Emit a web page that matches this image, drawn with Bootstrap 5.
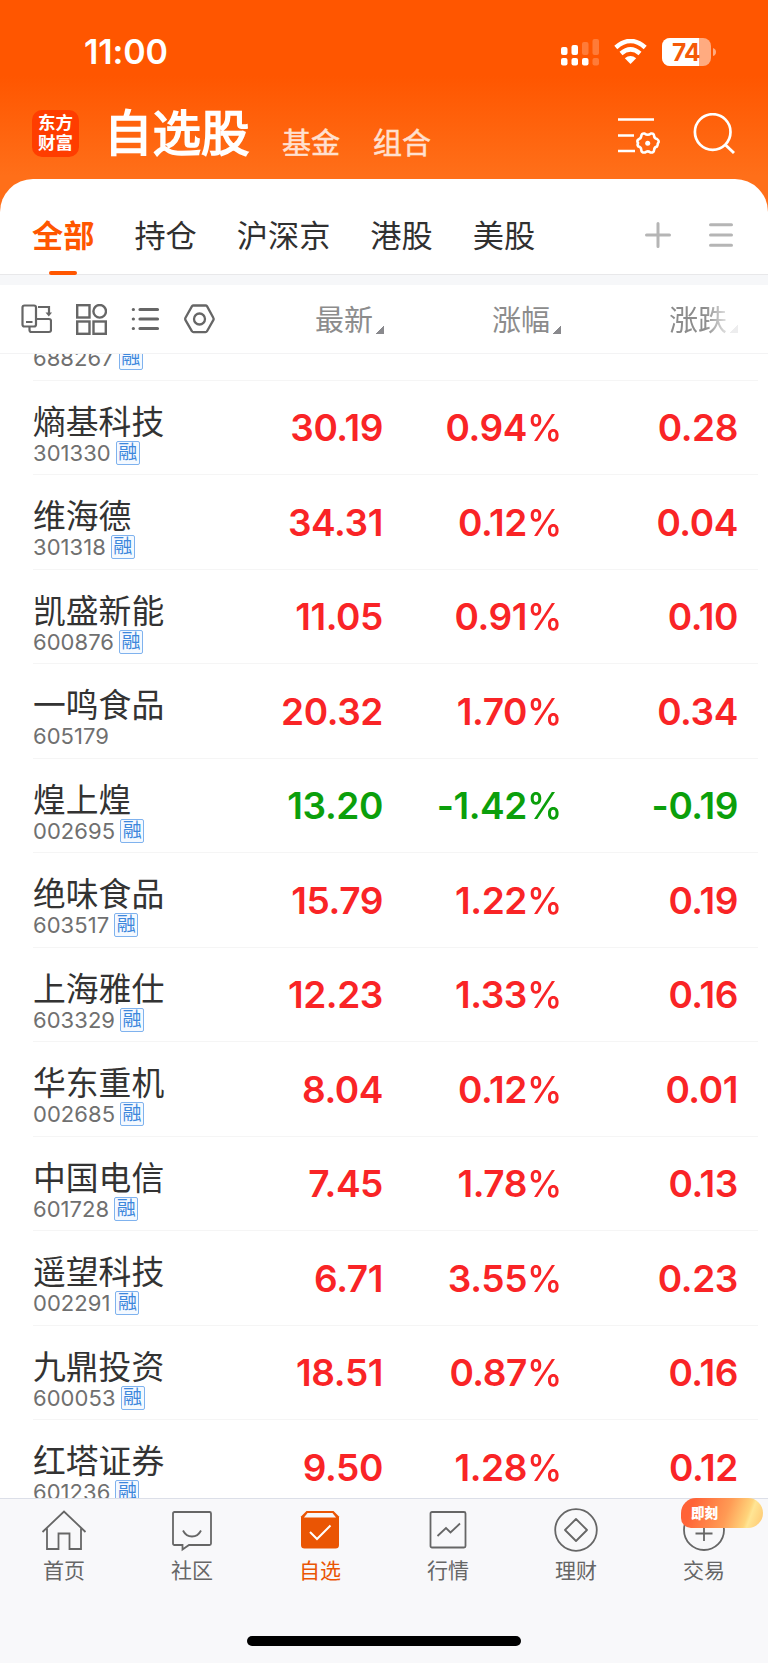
<!DOCTYPE html>
<html lang="zh-CN">
<head>
<meta charset="utf-8">
<meta name="viewport" content="width=device-width, initial-scale=1">
<title>自选股</title>
<link href="https://cdn.jsdelivr.net/npm/bootstrap@5.3.0/dist/css/bootstrap.min.css" rel="stylesheet">
<style>
body{font-family:Inter,"Noto Sans CJK SC",sans-serif;background:#fff;color:#333;line-height:1;overflow:hidden}
.screen{width:768px;height:1663px;overflow:hidden}
svg{display:block;flex:none}
.top-area{height:212px;background:linear-gradient(#ff5600 0,#ff5600 76px,#ff6f19 176px);padding-top:32px}
.status{height:40px;padding:0 52px 0 84px}
.clock{font-size:34px;font-weight:600;letter-spacing:-.1px}
.signals{gap:15px;margin-top:-1px}
.title-bar{height:80px;margin-top:22px;padding:0 33px 0 32px}
.logo{width:47px;height:47px;border-radius:10px;background:#ff3d00;color:#fff;font-size:17.5px;line-height:20px;font-weight:700;padding-top:3px;margin-top:-1px}
.main-title{font-size:48.5px;color:#fff;-webkit-text-stroke:1.7px #fff;margin-left:25px;width:145px;white-space:nowrap}
.sub-title{font-size:29px;color:#ffe0d0;-webkit-text-stroke:.5px #ffe0d0;margin:19px 0 0 33px}
.sheet{margin-top:-33px;height:96px;border-radius:33px 33px 0 0;background:#fff;border-bottom:1px solid #e8e8ea;padding:0 35px 0 32px}
.tabs-row{gap:40px}
.tab-item{font-size:31.2px;height:95px;padding-top:16px;position:relative;color:#303030}
.tab-item.on{color:#ff5600;font-weight:700}
.tab-item.on::after{content:"";position:absolute;bottom:-1px;left:50%;width:28px;height:4px;margin-left:-14px;border-radius:2px;background:#ff5600}
.strip{height:10px;background:#f6f7f9}
.tools{height:69px;border-bottom:1px solid #f3f3f4;padding-left:21px}
.quote-grid{display:grid;grid-template-columns:172px 178px 178px 177px}
.head-cell{font-size:29px;color:#8c8c8c;padding-top:3px}
.head-cell i{width:8px;height:8px;background:linear-gradient(135deg,transparent 50%,#89898d 50%);margin:19px 0 0 3px}
.fade-edge{-webkit-mask-image:linear-gradient(90deg,#000 52%,rgba(0,0,0,.15) 88%)}
.quotes{height:1144px;overflow:hidden}
.quotes-inner{margin-top:-68px;padding-left:33px}
.quote{height:94.5px;border-bottom:1.5px solid #f5f5f5;width:725px;align-items:center}
.stock-name{font-size:32.8px;line-height:36px;color:#333;padding-top:15px;white-space:nowrap}
.stock-code{font-size:22px;line-height:26px;color:#707070;letter-spacing:.05px}
.rong{width:24px;height:24px;border:1.5px solid #7fb2ee;border-radius:2px;color:#3d87dc;background:#f4f9ff;font-size:19px;line-height:21px;margin-left:5px;letter-spacing:0}
.num{font-size:37px;font-weight:600;text-align:right;color:#f92426;padding-top:1px;letter-spacing:-.4px;white-space:nowrap}
.pct{display:inline-block;width:34px;font-weight:500;letter-spacing:0;transform:scaleX(.96);transform-origin:0 50%}
.down .num{color:#0b9f0b}
.dock{height:165px;border-top:1.5px solid #dcdfe8;background:#f8f8fa;position:relative}
.dock-item{width:128px;font-size:21px;color:#666;padding-top:8px;position:relative}
.dock-item span{margin-top:7px}
.dock-item.on{color:#ea5504}
.promo{position:absolute;left:41px;top:-1px;width:82px;height:30px;border-radius:15px 15px 15px 10px;background:linear-gradient(110deg,#ff6337 15%,#ff9b55 55%,#ffd37a 78%,#ffe594 82%,#ffc56f);color:#fff;font-size:13.5px;font-weight:900;line-height:30px;padding-left:10px}
.home-bar{position:absolute;left:247px;bottom:17px;width:274px;height:10px;border-radius:5px;background:#000}
</style>
</head>
<body>
<div class="screen d-flex flex-column">
  <header class="top-area flex-shrink-0">
    <div class="status d-flex justify-content-between align-items-center text-white">
      <div class="clock">11:00</div>
      <div class="signals d-flex align-items-center">
        <svg width="38" height="28" fill="#fff"><rect x="0" y="9" width="6.500" height="8" rx="2"/><rect x="10.500" y="7" width="6.500" height="10" rx="2"/><g opacity=".22"><rect x="21" y="4" width="6.500" height="13" rx="2"/><rect x="31.500" y="1" width="6.500" height="16" rx="2"/><rect x="31.500" y="20" width="6.500" height="7.500" rx="2"/></g><rect x="0" y="20" width="6.500" height="7.500" rx="2"/><rect x="10.500" y="20" width="6.500" height="7.500" rx="2"/><rect x="21" y="20" width="6.500" height="7.500" rx="2"/></svg>
        <svg width="33" height="26" viewBox="0 0 33 26" fill="none" stroke="#fff" stroke-width="4.500"><path d="M1.800 8.500Q16.500-4.500 31.200 8.500M7 14.500Q16.500 6.300 26 14.500"/><path d="M10.800 19.300Q16.500 14.500 22.200 19.300L16.500 25Z" fill="#fff" stroke="none"/></svg>
        <svg width="54" height="28" viewBox="0 0 54 28"><defs><clipPath id="cell"><rect width="49" height="28" rx="8"/></clipPath></defs><g clip-path="url(#cell)"><rect width="49" height="28" fill="#ffab80"/><rect width="37" height="28" fill="#fff"/></g><path d="M51 10Q54 11 54 14T51 18Z" fill="#ffab80"/><text x="24" y="22.500" text-anchor="middle" font-family="Inter" font-weight="700" font-size="24.500" fill="#f55a08" letter-spacing="-.8">74</text></svg>
      </div>
    </div>
    <div class="title-bar d-flex align-items-center">
      <div class="logo text-center">东方<br>财富</div>
      <div class="main-title">自选股</div>
      <div class="sub-title">基金</div>
      <div class="sub-title">组合</div>
      <svg class="ms-auto" style="margin-top:1px" width="43" height="40" viewBox="0 0 43 40" fill="none" stroke="#fff" stroke-width="2.600"><path d="M0 4.500H36M0 20.500H16M0 36H17"/><path d="M26.500 18.500Q29.700 21 33 18.500Q36 18 36.200 21.500Q36.500 23.500 39 24Q42 26 39.800 28.500Q39.800 30 39 31.500Q36.500 32 36.200 34.500Q36 38 32.500 37.500Q29.700 35.200 27 37.500Q23.300 38 23.200 34.500Q23 32 20.400 31.500Q19 30 20 28Q18.500 25.500 20.500 24.500Q23 23.500 23.200 21.500Q23.500 18 26.500 18.500Z"/><circle cx="29.700" cy="28.200" r="2.500" fill="#fff" stroke="none"/></svg>
      <svg style="margin-left:32px" width="42" height="42" viewBox="0 0 42 42" fill="none" stroke="#fff" stroke-width="2.700"><circle cx="19.700" cy="19" r="17.800"/><path d="M32 31.500 41 40" stroke-width="3"/></svg>
    </div>
  </header>
  <nav class="sheet d-flex align-items-center flex-shrink-0">
    <div class="tabs-row d-flex">
      <div class="tab-item on d-flex align-items-center"><span class="d-block pt-1">全部</span></div>
      <div class="tab-item d-flex align-items-center"><span class="d-block pt-1">持仓</span></div>
      <div class="tab-item d-flex align-items-center"><span class="d-block pt-1">沪深京</span></div>
      <div class="tab-item d-flex align-items-center"><span class="d-block pt-1">港股</span></div>
      <div class="tab-item d-flex align-items-center"><span class="d-block pt-1">美股</span></div>
    </div>
    <svg class="ms-auto" style="margin-top:17px" width="26" height="26" stroke="#b5b5b5" stroke-width="3" stroke-linecap="round"><path d="M1.500 13H24.500M13 1.500V24.500"/></svg>
    <svg style="margin:17px 0 0 38px" width="24" height="26" stroke="#b5b5b5" stroke-width="3" stroke-linecap="round"><path d="M1.500 2.700H22.500M1.500 13H22.500M1.500 23.300H22.500"/></svg>
  </nav>
  <div class="strip flex-shrink-0"></div>
  <div class="tools d-flex align-items-center flex-shrink-0">
    <svg width="31" height="30" viewBox="0 0 31 30" fill="none" stroke="#666" stroke-width="2.200"><rect x="1.500" y="1.500" width="13.500" height="21" rx="2"/><path d="M8.500 22.500V26Q8.500 28 10.500 28H28Q30 28 30 26V17Q30 15 28 15H15M5 18H11.500M17 3H28V10"/><path d="M24.500 8.500H31L27.800 12.500Z" fill="#666" stroke="none"/></svg>
    <svg style="margin-left:24px" width="31" height="31" viewBox="0 0 31 31" fill="none" stroke="#666" stroke-width="2.400"><rect x="1.200" y="1.200" width="12.300" height="12.300"/><rect x="1.200" y="17.500" width="12.300" height="12.300"/><rect x="17.500" y="17.500" width="12.300" height="12.300"/><circle cx="23.700" cy="7.300" r="6.300"/></svg>
    <svg style="margin-left:24px" width="29" height="24" viewBox="0 0 29 24" stroke="#666" stroke-width="3.200" stroke-linecap="round"><path d="M9 2.500H26.500M9 12H26.500M9 21.500H26.500M2.300 2.500h.1M2.300 12h.1M2.300 21.500h.1"/></svg>
    <svg style="margin-left:24px" width="31" height="30" viewBox="0 0 31 30" fill="none" stroke="#666" stroke-width="2.300"><path d="M8 2.200Q8.500 1.500 9.500 1.500H21.500Q22.500 1.500 23 2.200L29.300 13.800Q30 15 29.300 16.200L23 27.300Q22.500 28.200 21.500 28.200H9.500Q8.500 28.200 8 27.300L1.500 16.200Q.9 15 1.500 13.800Z"/><circle cx="15.500" cy="15" r="5.500"/></svg>
    <div class="head-cell d-flex align-items-center justify-content-end" style="width:169px">最新<i></i></div>
    <div class="head-cell d-flex align-items-center justify-content-end" style="width:177px">涨幅<i></i></div>
    <div class="head-cell d-flex align-items-center justify-content-end" style="width:177px"><span class="d-flex fade-edge">涨跌<i></i></span></div>
  </div>
  <main class="quotes flex-shrink-0"><div class="quotes-inner">
    <div class="quote quote-grid"><div><div class="stock-name">&nbsp;</div><div class="stock-code d-flex align-items-center">688267<span class="rong text-center">融</span></div></div></div>
  </div></main>
  <footer class="dock flex-shrink-0">
    <div class="d-flex">
      <div class="dock-item d-flex flex-column align-items-center"><svg width="46" height="46" viewBox="0 0 46 46" fill="none" stroke="#666" stroke-width="1.800"><path d="M1.500 25 23 4.500 44.500 25M6 21.500V42H17.500V26.500H28.500V42H40V21.500"/></svg><span>首页</span></div>
      <div class="dock-item d-flex flex-column align-items-center"><svg width="46" height="46" viewBox="0 0 46 46" fill="none" stroke="#666" stroke-width="1.800"><path d="M5.500 5H40.500Q42 5 42 6.500V36.500Q42 38 40.500 38H20L13.500 42.500V38H5.500Q4 38 4 36.500V6.500Q4 5 5.500 5Z"/><path d="M14 23.500Q17 29.500 23 29.500T32 23.500"/></svg><span>社区</span></div>
      <div class="dock-item on d-flex flex-column align-items-center"><svg width="46" height="46" viewBox="0 0 46 46"><path d="M9.500 4H36.500L42 9.500V38Q42 41.500 38.500 41.500H7.500Q4 41.500 4 38V9.500Z" fill="#ea5504"/><path d="M10.500 6H35.500L39 10.500H7Z" fill="#f8f8fa"/><path d="M13 25 20 32 33.500 18.500" fill="none" stroke="#fff" stroke-width="2"/></svg><span>自选</span></div>
      <div class="dock-item d-flex flex-column align-items-center"><svg width="46" height="46" viewBox="0 0 46 46" fill="none" stroke="#666" stroke-width="1.800"><rect x="5.500" y="5" width="35" height="35.500" rx="1.500"/><path d="M12.500 29 21 21 25.500 25.500 35 16.500"/></svg><span>行情</span></div>
      <div class="dock-item d-flex flex-column align-items-center"><svg width="46" height="46" viewBox="0 0 46 46" fill="none" stroke="#666" stroke-width="1.800"><circle cx="23" cy="23" r="20.800"/><path d="M23 12 34 23 23 34 12 23Z" stroke-linejoin="round"/></svg><span>理财</span></div>
      <div class="dock-item d-flex flex-column align-items-center"><svg width="46" height="46" viewBox="0 0 46 46" fill="none" stroke="#666" stroke-width="1.800"><circle cx="23" cy="23" r="20"/><path d="M14.500 26.500H31.500M23 18V34"/></svg><span>交易</span><div class="promo">即刻</div></div>
    </div>
    <div class="home-bar"></div>
  </footer>
</div>
<script src="https://cdn.jsdelivr.net/npm/bootstrap@5.3.0/dist/js/bootstrap.bundle.min.js"></script>
<script>
// name, code, margin-eligible, price, change %, change
const stocks = [
  ["熵基科技","301330",1,"30.19","0.94","0.28"],
  ["维海德","301318",1,"34.31","0.12","0.04"],
  ["凯盛新能","600876",1,"11.05","0.91","0.10"],
  ["一鸣食品","605179",0,"20.32","1.70","0.34"],
  ["煌上煌","002695",1,"13.20","-1.42","-0.19"],
  ["绝味食品","603517",1,"15.79","1.22","0.19"],
  ["上海雅仕","603329",1,"12.23","1.33","0.16"],
  ["华东重机","002685",1,"8.04","0.12","0.01"],
  ["中国电信","601728",1,"7.45","1.78","0.13"],
  ["遥望科技","002291",1,"6.71","3.55","0.23"],
  ["九鼎投资","600053",1,"18.51","0.87","0.16"],
  ["红塔证券","601236",1,"9.50","1.28","0.12"]
];
document.querySelector(".quotes-inner").insertAdjacentHTML("beforeend", stocks.map(([n,c,r,p,q,d]) =>
  `<div class="quote quote-grid${d[0]==="-"?" down":""}"><div><div class="stock-name">${n}</div><div class="stock-code d-flex align-items-center">${c}${r?'<span class="rong text-center">融</span>':""}</div></div><div class="num">${p}</div><div class="num">${q}<span class="pct">%</span></div><div class="num">${d}</div></div>`).join(""));
</script>
</body>
</html>
